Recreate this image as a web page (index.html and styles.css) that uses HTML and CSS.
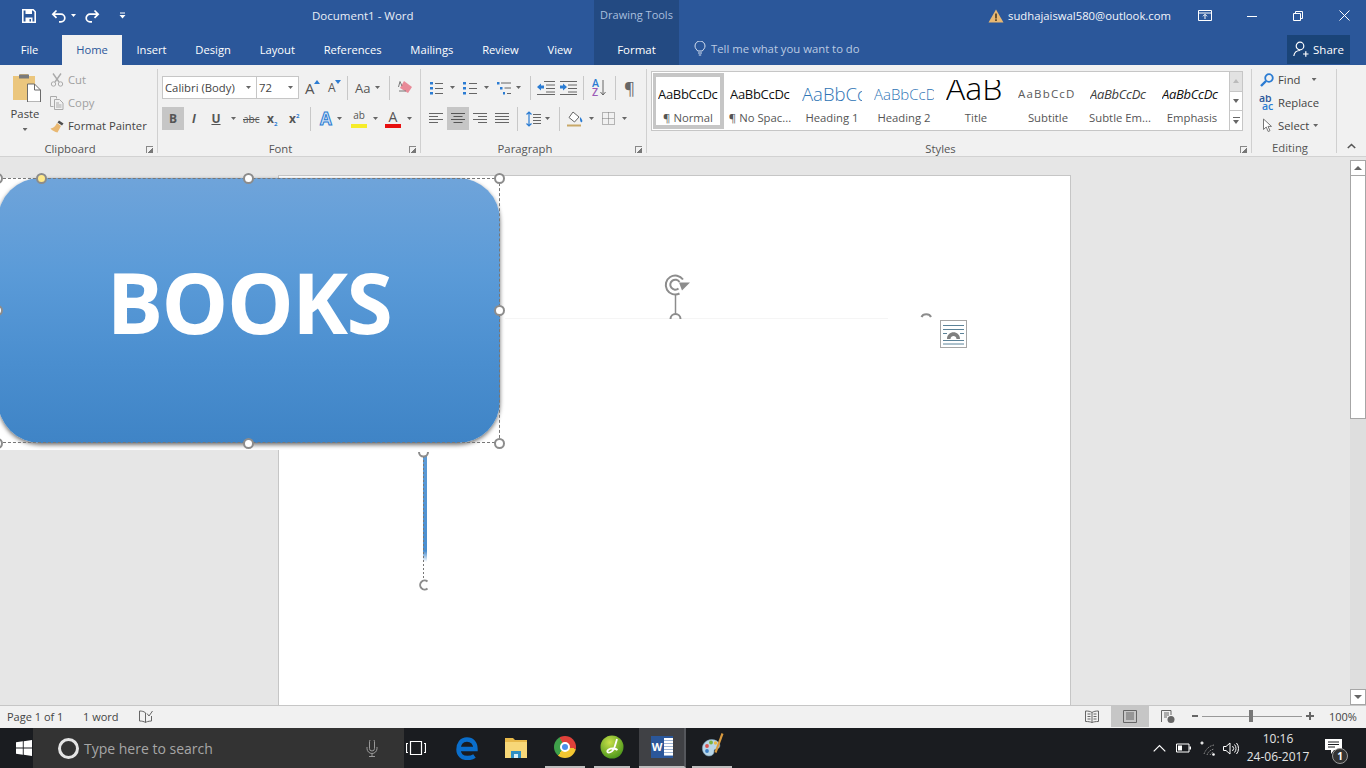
FILE: index.html
```html
<!DOCTYPE html>
<html lang="en">
<head>
    <meta charset="UTF-8">
    <title>Document1 - Word</title>
    <link rel="stylesheet" href="styles.css">
</head>
<body>
    <!-- Title bar and tabs -->
    <header class="header">
        <div class="header-left">
            <div class="title-row">
                <div class="qat">
                    <svg class="m22" width="14" height="14" viewBox="0 0 14 14"><path d="M.8.8h10.4l2 2v10.4H.8z" fill="none" stroke="#fff" stroke-width="1.6"/><path d="M3.5 1h6.5v4H3.5zM3.5 8.5h7V13h-1.5v-3h-1.5v3h-4z" fill="#fff"/></svg>
                    <svg class="m15" width="15" height="14" viewBox="0 0 15 14"><path d="M5.5 1.5 1.8 5.2l3.7 3.7M2 5.2h8a3.8 3.8 0 0 1 0 7.6H8" fill="none" stroke="#fff" stroke-width="1.7"/></svg>
                    <span class="caret caret-light m5"></span>
                    <svg class="m9" width="15" height="14" viewBox="0 0 15 14"><path d="M9.5 1.5l3.7 3.7-3.7 3.7M13 5.2H5a3.8 3.8 0 0 0 0 7.6h2" fill="none" stroke="#fff" stroke-width="1.7"/></svg>
                    <svg class="m19" width="7" height="7" viewBox="0 0 7 7"><path d="M1 .5h5v1H1zM.5 3h6L3.5 6.5z" fill="#fff"/></svg>
                </div>
                <span class="doc-title">Document1 - Word</span>
            </div>
            <nav class="tabs">
                <span class="tab tab-file">File</span>
                <span class="tab tab-active">Home</span>
                <span class="tab">Insert</span>
                <span class="tab">Design</span>
                <span class="tab">Layout</span>
                <span class="tab">References</span>
                <span class="tab">Mailings</span>
                <span class="tab">Review</span>
                <span class="tab">View</span>
            </nav>
        </div>
        <div class="context-tab">
            <span class="context-name">Drawing Tools</span>
            <span class="context-format">Format</span>
        </div>
        <div class="header-right">
            <div class="account-row">
                <svg class="warn" width="16" height="14" viewBox="0 0 16 14"><path d="M8 .5l7.5 13H.5z" fill="#e9b872"/><path d="M7.2 4.5h1.6v5H7.2zM7.2 10.3h1.6v1.7H7.2z" fill="#4b3a20"/></svg>
                <span class="email">sudhajaiswal580@outlook.com</span>
                <svg class="m26" width="14" height="11" viewBox="0 0 14 11"><path d="M.5.5h13v10H.5zM.5 3h13M7 9V4.5M5 6.3l2-2 2 2" fill="none" stroke="#fff"/></svg>
                <svg class="win-min" width="10" height="10" viewBox="0 0 10 10"><path d="M0 5.5h10" stroke="#fff"/></svg>
                <svg class="win-max" width="10" height="10" viewBox="0 0 10 10"><path d="M.5 2.5h7v7h-7zM2.5 2.5v-2h7v7h-2" fill="none" stroke="#fff"/></svg>
                <svg class="win-close" width="11" height="11" viewBox="0 0 11 11"><path d="M.5.5l10 10M10.5.5l-10 10" stroke="#fff"/></svg>
            </div>
            <div class="tell-row">
                <svg class="bulb" width="12" height="15" viewBox="0 0 12 15"><path d="M3.7 10C2.8 8.500 1 7.500 1 5a5 5 0 0 1 10 0c0 2.500-1.800 3.500-2.700 5zM4 12h4M4.800 14h2.400" fill="none" stroke="#d5e0f0"/></svg>
                <span class="tell">Tell me what you want to do</span>
                <span class="share">
                    <svg width="16" height="16" viewBox="0 0 16 16"><circle cx="7" cy="5" r="3.800" fill="none" stroke="#fff" stroke-width="1.200"/><path d="M.8 15c.5-3.500 3-5.500 6.200-5.500M10 13h5.500M12.800 10.200v5.500" fill="none" stroke="#fff" stroke-width="1.200"/></svg>
                    Share
                </span>
            </div>
        </div>
    </header>

    <!-- Ribbon -->
    <section class="ribbon">
        <div class="group group-clipboard">
            <div class="group-body clipboard">
                <div class="paste">
                    <svg width="28" height="29" viewBox="0 0 28 29"><path d="M0 3h7V1h8v2h7v24H0z" fill="#ebc67d"/><path d="M6 1.500h10v4H6z" fill="#7a7a7a"/><path d="M14.500 11h7l6 6v12h-13z" fill="#fff" stroke="#6b6b6b"/><path d="M21.500 11v6h6" fill="none" stroke="#6b6b6b"/></svg>
                    <span class="paste-label">Paste</span>
                    <span class="caret"></span>
                </div>
                <div class="action-list">
                    <div class="action action-off">
                        <svg width="14" height="14" viewBox="0 0 14 14"><path d="M3 .5l6 8.500M11 .5l-6 8.500" fill="none" stroke="#aaa" stroke-width="1.400"/><circle cx="3.500" cy="11" r="2.200" fill="none" stroke="#aaa"/><circle cx="10.500" cy="11" r="2.200" fill="none" stroke="#aaa"/></svg>
                        <span>Cut</span>
                    </div>
                    <div class="action action-off">
                        <svg width="14" height="14" viewBox="0 0 14 14"><path d="M.5.500h6v2M.5.500v10h3M4.500 3.500h5l3.500 3.500v6.500H4.500zM6 7h3M6 9h5.500M6 11h5.500" fill="none" stroke="#aaa"/></svg>
                        <span>Copy</span>
                    </div>
                    <div class="action">
                        <svg width="15" height="14" viewBox="0 0 15 14"><path d="M9 1.500l4.500 3-1.500 2-4.500-3z" fill="#4d4d4d"/><path d="M7 4l4 3-3.500 6.500C5 13 2 11.500.5 9.500 3 9.500 5.500 7 7 4z" fill="#e9b872"/></svg>
                        <span>Format Painter</span>
                    </div>
                </div>
            </div>
            <div class="group-label">Clipboard<i class="launcher"></i></div>
        </div>

        <div class="group group-font">
            <div class="group-body">
                <div class="row">
                    <span class="combo combo-font">Calibri (Body)<span class="caret"></span></span>
                    <span class="combo combo-size">72<span class="caret"></span></span>
                    <span class="font-a m6">A<i class="tri-up"></i></span>
                    <span class="font-a font-a-small m10">A<i class="tri-down"></i></span>
                    <span class="sep m7"></span>
                    <span class="change-case m7">Aa</span>
                    <span class="caret m4"></span>
                    <span class="sep m9"></span>
                    <svg class="m8" width="15" height="15" viewBox="0 0 15 15"><path d="M6 1l8 6-4 6-8-5z" fill="#e98a98"/><path d="M1 11h7M2 1.500L.5 7M2 1.500L4 6" fill="none" stroke="#777"/></svg>
                </div>
                <div class="row row-second">
                    <span class="fmt fmt-on">B</span>
                    <span class="fmt fmt-i m6">I</span>
                    <span class="fmt fmt-u m13">U</span>
                    <span class="caret m10"></span>
                    <span class="fmt-s m7">abc</span>
                    <span class="fmt-x m8">x<sub>2</sub></span>
                    <span class="fmt-x m9">x<sup>2</sup></span>
                    <span class="sep m8"></span>
                    <span class="effect m9">A</span>
                    <span class="caret m4"></span>
                    <span class="highlight m9">ab</span>
                    <span class="caret m6"></span>
                    <span class="font-color m7">A</span>
                    <span class="caret m6"></span>
                </div>
            </div>
            <div class="group-label">Font<i class="launcher"></i></div>
        </div>

        <div class="group group-para">
            <div class="group-body">
                <div class="row">
                    <svg width="14" height="14" viewBox="0 0 14 14"><path d="M1 1h3v2.500H1zM1 6h3v2.500H1zM1 11h3v2.500H1z" fill="#2b7cd3"/><path d="M6 2.500h8M6 7.500h8M6 12.500h8" stroke="#666"/></svg>
                    <span class="caret m7"></span>
                    <svg class="m8" width="14" height="14" viewBox="0 0 14 14"><path d="M0 1h3v2.500H0zM0 6h3v2.500H0zM0 11h3v2.500H0z" fill="#2b7cd3"/><path d="M6 2.500h8M6 7.500h8M6 12.500h8" stroke="#666"/></svg>
                    <span class="caret m7"></span>
                    <svg class="m8" width="14" height="14" viewBox="0 0 14 14"><path d="M0 1h2.500v2.500H0zM3 6h2.500v2.500H3zM6 11h2v2.500H6z" fill="#2b7cd3"/><path d="M4 2h10M7.500 7h6.500M10 12.500h4" stroke="#666"/></svg>
                    <span class="caret m5"></span>
                    <span class="sep m9"></span>
                    <svg class="m6" width="18" height="14" viewBox="0 0 18 14"><path d="M7 .5h11M9 4h9M9 7.500h9M9 11h9M0 13.500h18" stroke="#666"/><path d="M0 6l4-3.500v2h3v3H4v2z" fill="#2b7cd3"/></svg>
                    <svg class="m5" width="17" height="14" viewBox="0 0 17 14"><path d="M0 .5h17M8 4h9M8 7.500h9M8 11h9M0 13.500h17" stroke="#666"/><path d="M7 6L3 2.500v2H0v3h3v2z" fill="#2b7cd3"/></svg>
                    <span class="sep m6"></span>
                    <svg class="m8 icon-text" width="15" height="18" viewBox="0 0 15 18"><text x="0" y="8" fill="#2b7cd3">A</text><text x="0" y="17" fill="#9b59b6">Z</text><path d="M11 1v15M8.500 13l2.500 3 2.500-3" fill="none" stroke="#666"/></svg>
                    <span class="sep m8"></span>
                    <span class="pilcrow m8">¶</span>
                </div>
                <div class="row row-second">
                    <svg width="14" height="12" viewBox="0 0 14 12"><path d="M0 .5h14M0 3.500h9M0 6.500h14M0 9.500h9" stroke="#666"/></svg>
                    <span class="fmt fmt-on m4"><svg width="14" height="12" viewBox="0 0 14 12"><path d="M0 .5h14M2.500 3.500h9M0 6.500h14M2.500 9.500h9" stroke="#555"/></svg></span>
                    <svg class="m4" width="14" height="12" viewBox="0 0 14 12"><path d="M0 .5h14M5 3.500h9M0 6.500h14M5 9.500h9" stroke="#666"/></svg>
                    <svg class="m8" width="14" height="12" viewBox="0 0 14 12"><path d="M0 .5h14M0 3.500h14M0 6.500h14M0 9.500h14" stroke="#666"/></svg>
                    <span class="sep m8"></span>
                    <svg class="m8" width="15" height="16" viewBox="0 0 15 16"><path d="M3 1v14M.5 3.500L3 1l2.500 2.500M.5 12.500L3 15l2.500-2.500" fill="none" stroke="#2b7cd3" stroke-width="1.200"/><path d="M7 3.500h8M7 6.500h8M7 9.500h8M7 12.500h8" stroke="#666"/></svg>
                    <span class="caret m4"></span>
                    <span class="sep m9"></span>
                    <svg class="m7" width="17" height="16" viewBox="0 0 17 16"><path d="M6 1l6 5-4.500 5L2 6.500z" fill="#fff" stroke="#666"/><path d="M13 6c2 2 3 4 2 5s-2.500-1-2-5z" fill="#2b7cd3"/><path d="M0 14.500h14" stroke="#c8a868" stroke-width="2"/></svg>
                    <span class="caret m5"></span>
                    <svg class="m8" width="13" height="13" viewBox="0 0 13 13"><path d="M.5.500h12v12H.5zM6.500.500v12M.5 6.500h12" fill="none" stroke="#777" stroke-dasharray="1 1"/></svg>
                    <span class="caret m7"></span>
                </div>
            </div>
            <div class="group-label">Paragraph<i class="launcher"></i></div>
        </div>

        <div class="group group-styles">
            <div class="group-body styles-body">
                <div class="gallery">
                    <div class="style-item active"><span class="sample sample-normal">AaBbCcDc</span><span class="style-name">¶ Normal</span></div>
                    <div class="style-item"><span class="sample sample-normal">AaBbCcDc</span><span class="style-name">¶ No Spac...</span></div>
                    <div class="style-item"><span class="sample sample-h1">AaBbCc</span><span class="style-name">Heading 1</span></div>
                    <div class="style-item"><span class="sample sample-h2">AaBbCcD</span><span class="style-name">Heading 2</span></div>
                    <div class="style-item"><span class="sample sample-title">AaB</span><span class="style-name">Title</span></div>
                    <div class="style-item"><span class="sample sample-sub">AaBbCcD</span><span class="style-name">Subtitle</span></div>
                    <div class="style-item"><span class="sample sample-subtle">AaBbCcDc</span><span class="style-name">Subtle Em...</span></div>
                    <div class="style-item"><span class="sample sample-emph">AaBbCcDc</span><span class="style-name">Emphasis</span></div>
                </div>
                <div class="gallery-scroll">
                    <span class="gs-btn gs-up"><i class="tri-up"></i></span>
                    <span class="gs-btn"><i class="tri-down"></i></span>
                    <span class="gs-btn gs-more"><i class="more-line"></i><i class="tri-down"></i></span>
                </div>
            </div>
            <div class="group-label">Styles<i class="launcher"></i></div>
        </div>

        <div class="group group-editing">
            <div class="group-body editing">
                <div class="action">
                    <svg width="14" height="14" viewBox="0 0 14 14"><circle cx="9" cy="5" r="3.800" fill="none" stroke="#2b7cd3" stroke-width="1.800"/><path d="M6 8l-5 5" stroke="#2b7cd3" stroke-width="2.400"/></svg>
                    <span>Find</span><span class="caret m7"></span>
                </div>
                <div class="action">
                    <svg class="replace-icon icon-text" width="16" height="16" viewBox="0 0 16 16"><text x="0" y="7" fill="#2b579a">ab</text><text x="3" y="15" fill="#2b7cd3">ac</text></svg>
                    <span>Replace</span>
                </div>
                <div class="action">
                    <svg width="14" height="15" viewBox="0 0 14 15"><path d="M3.500 1v10.500l2.700-2.500 2 4.500 1.800-.8-2-4.300H11.500z" fill="#fff" stroke="#777"/></svg>
                    <span>Select</span><span class="caret"></span>
                </div>
            </div>
            <div class="group-label">Editing</div>
        </div>

        <div class="collapse">
            <svg width="9" height="6" viewBox="0 0 9 6"><path d="M.8 5l3.700-3.500L8.200 5" fill="none" stroke="#555" stroke-width="1.600"/></svg>
        </div>
    </section>

    <!-- Document area -->
    <main class="workspace">
        <div class="doc-scroll">
            <div class="page"></div>
            <div class="page-patch"></div>

            <div class="shape"><span class="shape-text">BOOKS</span></div>
            <div class="selection">
                <i class="handle handle-yellow"></i>
                <i class="handle handle-tl"></i>
                <i class="handle handle-tc"></i>
                <i class="handle handle-tr"></i>
                <i class="handle handle-ml"></i>
                <i class="handle handle-mr"></i>
                <i class="handle handle-bl"></i>
                <i class="handle handle-bc"></i>
                <i class="handle handle-br"></i>
            </div>
            <div class="sliver"></div>

            <svg class="canvas-marks" width="1350" height="550" viewBox="0 0 1350 550">
                <path d="M505 161.500h383" stroke="#f5f5f5"/>
                <path d="M423.500 295v133" stroke="#777" stroke-dasharray="2 2"/>
                <path d="M419 295a4.500 4.500 0 0 0 9 0M427.500 424.500a4.500 4.500 0 1 0 0 7" fill="#fff" stroke="#8c8c8c" stroke-width="2"/>
                <path d="M675.500 137v21" stroke="#8c8c8c" stroke-width="1.500"/>
                <path d="M670.500 162a5 5 0 0 1 10 0" fill="none" stroke="#8c8c8c" stroke-width="2"/>
                <path d="M921.500 160a5 4 0 0 1 9.500 0" fill="none" stroke="#8c8c8c" stroke-width="2"/>
                <path d="M683 122.500A9.500 9.500 0 1 0 679.500 136.500" fill="none" stroke="#8c8c8c" stroke-width="2"/>
                <path d="M679.500 125A5 5 0 1 0 678.500 131.500" fill="none" stroke="#8c8c8c" stroke-width="2"/>
                <path d="M679 125.500h11l-8 8z" fill="#8c8c8c"/>
            </svg>

            <div class="layout-btn">
                <svg width="21" height="21" viewBox="0 0 21 21"><path d="M0 1.500h21M0 5.500h21M0 9.500h4M17 9.500h4M0 16.500h21M0 20h21" stroke="#5b8298"/><path d="M4 15c0-9 13-9 13 0h-3.500c0-4-6-4-6 0z" fill="#7f7f7f"/></svg>
            </div>
        </div>

        <div class="scrollbar">
            <span class="sb-btn"><i class="tri-up"></i></span>
            <span class="sb-thumb"></span>
            <span class="sb-btn sb-down"><i class="tri-down"></i></span>
        </div>
    </main>

    <!-- Status bar -->
    <footer class="status">
        <span class="status-page">Page 1 of 1</span>
        <span class="status-words">1 word</span>
        <svg class="status-proof" width="14" height="13" viewBox="0 0 14 13"><path d="M6 2.500C5 1.500 3 1 .5 1v10c2.500 0 4.500.5 6 1.500M6.500 2.500v10M6.500 12.500c1-.7 2.500-1.300 6-1.500V6" fill="none" stroke="#666"/><path d="M8 3.500l2 2.500 3.500-5" fill="none" stroke="#666"/></svg>
        <div class="status-right">
            <svg width="14" height="13" viewBox="0 0 14 13"><path d="M.5 1c2.500 0 5 .3 6.500 1.500C8.500 1.300 11 1 13.500 1v10.500c-2.500 0-5 .3-6.500 1-1.500-.7-4-1-6.500-1zM7 2.500v10M2.500 4h3M2.500 6.500h3M2.500 9h3M8.500 4h3M8.500 6.500h3M8.500 9h3" fill="none" stroke="#666"/></svg>
            <span class="view-on"><svg width="14" height="13" viewBox="0 0 14 13"><path d="M.5.500h13v12H.5zM3 3h8M3 5h8M3 7h8M3 9h8" fill="none" stroke="#666"/></svg></span>
            <svg width="14" height="13" viewBox="0 0 14 13"><path d="M.5 12V.500h9.500V5M3 3h5M3 5h5M3 7h3" fill="none" stroke="#666"/><circle cx="10" cy="9.500" r="3.500" fill="#666"/></svg>
            <span class="zoom-minus"></span>
            <span class="zoom-track"><i class="zoom-thumb"></i></span>
            <span class="zoom-plus"></span>
            <span class="zoom-value">100%</span>
        </div>
    </footer>

    <!-- Windows taskbar -->
    <div class="taskbar">
        <div class="start">
            <svg width="16" height="16" viewBox="0 0 16 16"><path d="M0 2.300 6.800 1.300V7.500H0zM7.700 1.200 16 0V7.500H7.700zM0 8.500h6.800v6.200L0 13.700zM7.700 8.500H16V16L7.700 14.800z" fill="#fff"/></svg>
        </div>
        <div class="search">
            <span class="cortana"></span>
            <span class="search-text">Type here to search</span>
            <svg class="mic" width="12" height="17" viewBox="0 0 12 17"><path d="M3.500 1.500a2.500 2.500 0 0 1 5 0v7a2.500 2.500 0 0 1-5 0zM1 7v1.500a5 5 0 0 0 10 0V7M6 13.500V16M3 16.500h6" fill="none" stroke="#9a9a9a"/></svg>
        </div>
        <div class="app app-view">
            <svg width="20" height="16" viewBox="0 0 20 16"><path d="M4.500 1.500h11v13h-11zM2 3.500H.5v9H2M18 3.500h1.500v9H18" fill="none" stroke="#fff" stroke-width="1.200"/></svg>
        </div>
        <div class="app app-edge">
            <svg width="22" height="23" viewBox="0 0 22 23"><path d="M2.500 12H19.500C19.500 6 16 2.500 11 2.500 5.500 2.500 2.500 7 2.500 12.500c0 5.500 4 8.500 9 8.500 3 0 5.500-1 7-2" fill="none" stroke="#0a6ecb" stroke-width="4.400"/></svg>
        </div>
        <div class="app app-folder">
            <svg width="22" height="22" viewBox="0 0 22 22"><path d="M0 1h8l2 2h12v4H0z" fill="#e8b94a"/><path d="M0 5h22v16H0z" fill="#f7d778"/><path d="M6 14h10v7H6z" fill="#2f8fc4"/><path d="M9 17h4v4H9z" fill="#d8eef8"/></svg>
        </div>
        <div class="app app-chrome app-open"><span class="chrome-icon"><i></i></span></div>
        <div class="app app-green app-open">
            <svg width="24" height="24" viewBox="0 0 24 24"><defs><radialGradient id="dwBall" cx=".4" cy=".3" r=".8"><stop offset="0" stop-color="#c8e04a"/><stop offset="1" stop-color="#3f8f16"/></radialGradient></defs><circle cx="12" cy="12" r="11.500" fill="url(#dwBall)"/><path d="M17 4c-1.500 5-2 8-3.500 10.500s-5 4-6 2.500 2-4 6.500-3.500c1 .1 2.500.7 3.500 1.500" fill="none" stroke="#fff" stroke-width="1.800"/></svg>
        </div>
        <div class="app app-word app-open">
            <span class="word-icon"><b>W</b><i></i></span>
        </div>
        <div class="app app-paint app-open">
            <svg width="25" height="32" viewBox="0 0 25 32"><path d="M3 14c3-6 11-7 15-3 3 3 2 6-1 7-3 0-3 1-3 3s-2 4-5 4c-5 0-8-6-6-11z" fill="#b9d6e8" stroke="#7ba0b8" stroke-width=".6"/><circle cx="7" cy="15" r="1.900" fill="#d9534f"/><circle cx="11" cy="11.500" r="1.900" fill="#7cb342"/><circle cx="15.500" cy="12" r="1.700" fill="#e8b94a"/><circle cx="7" cy="20" r="1.900" fill="#3d7fc4"/><path d="M21.500 2l2 1-7 19-2-1z" fill="#d99a3f"/></svg>
        </div>
        <div class="tray">
            <svg width="13" height="8" viewBox="0 0 13 8"><path d="M.7 7.300 6.500 1.500l5.800 5.800" fill="none" stroke="#fff" stroke-width="1.200"/></svg>
            <svg class="m10" width="15" height="10" viewBox="0 0 15 10"><path d="M.5 1h12.500v8H.5z" fill="none" stroke="#fff"/><path d="M2 2.500h4v5H2zM13.500 3.500H15v3h-1.500z" fill="#fff"/></svg>
            <svg class="m9" width="16" height="15" viewBox="0 0 16 15"><path d="M1 1l2 2M3 1L1 3M2 0v4M0 2h4" stroke="#fff" stroke-width=".7"/><path d="M4 13C6 8 9 5 14 4M7 14c1-3 3-5 7-6M10 14c.8-1.500 2-2.500 4-3" fill="none" stroke="#8a8a8a" stroke-dasharray="1.500 1"/><circle cx="13.500" cy="13.500" r="1.300" fill="#fff"/></svg>
            <svg class="m7" width="16" height="13" viewBox="0 0 16 13"><path d="M.5 4.500h2.500L7 1v11L3 8.500H.5z" fill="none" stroke="#fff"/><path d="M9.500 4a3.500 3.500 0 0 1 0 5M11.500 2.500a6 6 0 0 1 0 8M13.500 1a8.500 8.500 0 0 1 0 11" fill="none" stroke="#fff"/></svg>
            <div class="clock"><span>10:16</span><span>24-06-2017</span></div>
            <span class="notify">
                <svg width="17" height="15" viewBox="0 0 17 15"><path d="M0 0h17v11h-8l-3 4v-4H0z" fill="#fff"/><path d="M3 3h11M3 5.500h11M3 8h7" stroke="#1a1c20"/></svg>
                <span class="notify-badge">1</span>
            </span>
        </div>
    </div>
</body>
</html>
```

FILE: styles.css
```css
/* Global Styles */
* {
    box-sizing: border-box;
}

html, body {
    margin: 0;
    padding: 0;
    height: 100%;
    overflow: hidden;
}

body {
    width: 1366px;
    height: 768px;
    font-family: 'Open Sans', 'Noto Sans', sans-serif;
    font-size: 11.3px;
    color: #444;
    background: #e6e6e6;
    display: flex;
    flex-direction: column;
}

svg {
    display: block;
    flex: none;
}

i {
    display: block;
    font-style: normal;
}

/* left margins for the icon rows */
.m4 { margin-left: 4px; }
.m5 { margin-left: 5px; }
.m6 { margin-left: 6px; }
.m7 { margin-left: 7px; }
.m8 { margin-left: 8px; }
.m9 { margin-left: 9px; }
.m10 { margin-left: 10px; }
.m13 { margin-left: 13px; }
.m15 { margin-left: 15px; }
.m19 { margin-left: 19px; }
.m22 { margin-left: 22px; }
.m26 { margin-left: 26px; }

.caret {
    flex: none;
    width: 5px;
    height: 3px;
    background: #666;
    clip-path: polygon(0 0, 100% 0, 50% 100%);
}

.caret-light {
    background: #fff;
}

.tri-up, .tri-down {
    width: 0;
    height: 0;
    border-left: 4px solid transparent;
    border-right: 4px solid transparent;
}

.tri-up {
    border-bottom: 4px solid #666;
}

.tri-down {
    border-top: 4px solid #666;
}

/* letters inside an icon */
.icon-text text {
    font-size: 10.5px;
    font-weight: 600;
}

/* Header */
.header {
    height: 65px;
    flex: none;
    display: flex;
    background: #2b579a;
    color: #fff;
    font-size: 11.5px;
}

.header-left {
    width: 594px;
    flex: none;
}

.title-row {
    height: 35px;
    display: flex;
    align-items: center;
    padding-bottom: 4px;
}

.qat {
    width: 312px;
    flex: none;
    display: flex;
    align-items: center;
}

.doc-title {
    color: #e9eef6;
}

.tabs {
    height: 30px;
    display: flex;
    font-size: 11.2px;
}

.tab {
    flex: none;
    height: 30px;
    line-height: 29px;
    padding: 0 14.4px;
    white-space: nowrap;
}

.tab-file {
    width: 62px;
    text-align: center;
    padding: 0 3px 0 0;
}

.tab-active {
    width: 60px;
    padding: 0;
    text-align: center;
    background: #f1f1f1;
    color: #2b579a;
}

.context-tab {
    width: 85px;
    flex: none;
    display: flex;
    flex-direction: column;
    align-items: center;
    background: #234a82;
}

.context-name {
    height: 35px;
    line-height: 30px;
    font-size: 11px;
    color: #a9bfde;
}

.context-format {
    height: 30px;
    line-height: 29px;
}

.header-right {
    flex: 1;
}

.account-row {
    height: 35px;
    display: flex;
    align-items: center;
    padding: 0 0 4px 309px;
}

.email {
    margin-left: 4px;
    width: 164px;
    flex: none;
    white-space: nowrap;
    font-size: 11.3px;
    color: #f2f5fa;
}

.win-min { margin-left: 35px; }
.win-max { margin-left: 36px; }
.win-close { margin-left: 36px; }

.tell-row {
    height: 30px;
    display: flex;
    align-items: center;
    padding: 0 0 1px 15px;
}

.tell {
    margin: 0 0 2px 5px;
    width: 151px;
    flex: none;
    white-space: nowrap;
    font-size: 11.3px;
    color: #bccbe2;
}

.bulb {
    margin-bottom: 2px;
}

.share {
    margin-left: 425px;
    width: 63px;
    height: 29px;
    flex: none;
    display: flex;
    align-items: center;
    justify-content: center;
    gap: 4px;
    padding-bottom: 1px;
    background: #1a4478;
}

/* Ribbon */
.ribbon {
    height: 92px;
    flex: none;
    display: flex;
    align-items: flex-start;
    background: #f1f1f1;
    border-bottom: 1px solid #d2d2d2;
    padding-top: 4px;
}

.group {
    height: 84px;
    flex: none;
    border-right: 1px solid #d0d0d0;
    display: flex;
    flex-direction: column;
}

.group-clipboard { width: 158px; }
.group-font { width: 263px; }
.group-para { width: 226px; }
.group-styles { width: 605px; }
.group-editing { width: 85px; }

.group-body {
    height: 74px;
    padding-top: 7px;
}

.group-font .group-body { padding-left: 4px; }
.group-para .group-body { padding-left: 8px; }

.group-label {
    position: relative;
    height: 10px;
    line-height: 12px;
    text-align: center;
    padding-right: 17px;
    color: #555;
}

.group-editing .group-label {
    padding-right: 8px;
}

.launcher {
    position: absolute;
    right: 4px;
    top: 3px;
    width: 7px;
    height: 7px;
    border-left: 1px solid #888;
    border-top: 1px solid #888;
    background: linear-gradient(135deg, transparent 55%, #777 55%);
}

.row {
    height: 23px;
    display: flex;
    align-items: center;
}

.row-second {
    margin-top: 8px;
}

.sep {
    flex: none;
    width: 1px;
    height: 24px;
    background: #c8c8c8;
}

/* Clipboard */
.clipboard {
    display: flex;
    padding-top: 0;
}

.paste {
    width: 50px;
    flex: none;
    display: flex;
    flex-direction: column;
    align-items: center;
    padding-top: 4px;
}

.paste svg {
    margin-left: 3px;
}

.paste-label {
    margin-top: 4px;
    color: #444;
}

.paste .caret {
    margin-top: 7px;
}

.action-list, .editing {
    margin-top: -1px;
}

.action {
    height: 23px;
    display: flex;
    align-items: center;
    gap: 3px;
    white-space: nowrap;
}

.action-off {
    color: #a0a0a0;
}

.action-off svg {
    margin-right: 1px;
}

/* Font group */
.combo {
    flex: none;
    height: 23px;
    display: flex;
    align-items: center;
    justify-content: space-between;
    background: #fff;
    border: 1px solid #c6c6c6;
    padding: 0 5px 0 2px;
    white-space: nowrap;
}

.combo-font { width: 94px; border-right: 0; }
.combo-size { width: 43px; }

.font-a {
    flex: none;
    width: 13px;
    display: flex;
    align-items: flex-start;
    font-size: 15px;
    line-height: 18px;
    color: #555;
}

.font-a i {
    margin: 1px 0 0 -1px;
    border-left-width: 3px;
    border-right-width: 3px;
    border-top-color: #2b7cd3;
    border-bottom-color: #2b7cd3;
}

.font-a-small {
    width: 12px;
    font-size: 12px;
}

.change-case {
    flex: none;
    width: 16px;
    font-size: 13px;
    color: #555;
}

.fmt {
    flex: none;
    display: flex;
    align-items: center;
    justify-content: center;
    color: #555;
    font-weight: 700;
    font-size: 12px;
}

.fmt-on {
    width: 22px;
    height: 23px;
    background: #c6c6c6;
}

.fmt-i {
    width: 8px;
    font-style: italic;
}

.fmt-u {
    width: 10px;
    text-decoration: underline;
}

.fmt-s {
    flex: none;
    width: 16px;
    font-size: 10px;
    color: #555;
    text-decoration: line-through;
}

.fmt-x {
    flex: none;
    width: 13px;
    font-size: 12px;
    font-weight: 700;
    color: #555;
    line-height: 12px;
}

.fmt-x sub, .fmt-x sup {
    font-size: 6px;
    line-height: 0;
    color: #2b7cd3;
}

.effect {
    flex: none;
    width: 13px;
    font-size: 17px;
    font-weight: 700;
    line-height: 20px;
    color: #cfe1f5;
    -webkit-text-stroke: 1px #2b7cd3;
}

.highlight {
    flex: none;
    width: 16px;
    height: 19px;
    font-size: 10px;
    line-height: 13px;
    text-align: center;
    color: #555;
    border-bottom: 4px solid #f6ec2a;
}

.font-color {
    flex: none;
    width: 16px;
    height: 19px;
    font-size: 14px;
    line-height: 15px;
    text-align: center;
    color: #555;
    border-bottom: 4px solid #e81010;
}

/* Paragraph group */
.pilcrow {
    flex: none;
    width: 12px;
    font-size: 17px;
    line-height: 18px;
    color: #666;
}

/* Styles gallery */
.styles-body {
    display: flex;
    padding: 2px 0 0 4px;
}

.gallery {
    width: 578px;
    height: 60px;
    flex: none;
    display: flex;
    background: #fff;
    border: 1px solid #c6c6c6;
    border-right: 0;
}

.style-item {
    width: 72px;
    height: 58px;
    flex: none;
    display: flex;
    flex-direction: column;
    align-items: center;
    padding-top: 8px;
    overflow: hidden;
}

.style-item.active {
    width: 71px;
    margin-left: 1px;
    height: 56px;
    margin-top: 1px;
    padding-top: 3px;
    border: 4px solid #c6c6c6;
    border-left-width: 3px;
}

.sample {
    flex: none;
    width: 60px;
    height: 28px;
    line-height: 28px;
    overflow: hidden;
    white-space: nowrap;
    color: #111;
    font-size: 13px;
}

.sample-normal {
    letter-spacing: -.3px;
}

.sample-h1 {
    font-size: 18.5px;
    color: #2e74b5;
    font-weight: 300;
}

.sample-h2 {
    font-size: 15px;
    color: #2e74b5;
    font-weight: 300;
}

.sample-title {
    font-size: 32px;
    font-weight: 300;
    line-height: 15px;
    color: #000;
    height: 23px;
    margin-bottom: 5px;
}

.sample-sub {
    color: #5a5a5a;
    letter-spacing: 1.2px;
    font-size: 11.5px;
}

.sample-subtle {
    font-style: italic;
    color: #404040;
    letter-spacing: -.3px;
}

.sample-emph {
    font-style: italic;
    letter-spacing: -.3px;
}

.style-name {
    flex: none;
    margin-top: 2px;
    line-height: 16px;
    white-space: nowrap;
    color: #555;
}

.gallery-scroll {
    width: 14px;
    height: 60px;
    flex: none;
    display: flex;
    flex-direction: column;
    background: #fff;
    border: 1px solid #c6c6c6;
}

.gs-btn {
    flex: 1;
    display: flex;
    flex-direction: column;
    align-items: center;
    justify-content: center;
    gap: 2px;
    border-bottom: 1px solid #c6c6c6;
}

.gs-btn:last-child {
    border-bottom: 0;
}

.gs-btn i {
    border-left-width: 3px;
    border-right-width: 3px;
}

.gs-up {
    background: #e2e2e2;
}

.gs-up i {
    border-bottom-color: #bbb;
}

.more-line {
    width: 7px;
    height: 1px;
    background: #666;
}

/* Editing */
.editing {
    padding: 0 0 0 7px;
}

.editing .action {
    gap: 4px;
}

.editing svg {
    margin-left: 1px;
}

.editing .replace-icon {
    margin: 0 -1px 0 0;
}

.collapse {
    width: 29px;
    flex: none;
    padding: 74px 0 0 10px;
}

/* Document area */
.workspace {
    height: 549px;
    flex: none;
    display: flex;
    background: #e6e6e6;
    border-bottom: 1px solid #c6c6c6;
}

.doc-scroll {
    position: relative;
    width: 1350px;
    flex: none;
    overflow: hidden;
    padding: 18px 0 0 278px;
}

.page {
    width: 793px;
    height: 540px;
    background: #fff;
    border: 1px solid #c6c6c6;
}

.page-patch {
    position: absolute;
    left: 0;
    top: 21px;
    width: 290px;
    height: 272px;
    background: #fff;
}

.shape {
    position: absolute;
    left: -2px;
    top: 21px;
    width: 502px;
    height: 265px;
    border-radius: 42px;
    background: linear-gradient(to bottom, #6fa4da 0%, #5b9bd8 35%, #4a8ecf 70%, #3f84c6 100%);
    box-shadow: 0 2px 4px rgba(0, 0, 0, .55);
    display: flex;
    align-items: center;
    justify-content: center;
    padding-bottom: 18px;
}

.shape-text {
    font-size: 84px;
    font-weight: 700;
    line-height: 1;
    color: #fff;
    letter-spacing: -1.5px;
}

.selection {
    position: absolute;
    left: -2px;
    top: 21px;
    width: 502px;
    height: 265px;
    border: 1px dashed #777;
}

.handle {
    position: absolute;
    width: 11px;
    height: 11px;
    border-radius: 50%;
    background: #fff;
    border: 2px solid #8c8c8c;
}

.handle-yellow { left: 37px; top: -6px; background: #ffe98a; }
.handle-tl { left: -7px; top: -6px; }
.handle-tc { left: 244px; top: -6px; }
.handle-tr { left: 495px; top: -6px; }
.handle-ml { left: -7px; top: 126px; }
.handle-mr { left: 495px; top: 126px; }
.handle-bl { left: -7px; top: 259px; }
.handle-bc { left: 244px; top: 259px; }
.handle-br { left: 495px; top: 259px; }

.sliver {
    position: absolute;
    left: 423px;
    top: 295px;
    width: 4px;
    height: 110px;
    background: linear-gradient(to bottom, #5d9bd6, #4a8ecf 90%, #fff);
}

.canvas-marks {
    position: absolute;
    left: 0;
    top: 0;
}

.layout-btn {
    position: absolute;
    left: 940px;
    top: 163px;
    width: 27px;
    height: 28px;
    display: flex;
    align-items: center;
    justify-content: center;
    background: #fff;
    border: 1px solid #a6a6a6;
}

/* Scrollbar */
.scrollbar {
    width: 16px;
    flex: none;
    margin-top: 3px;
    display: flex;
    flex-direction: column;
    background: #dedede;
}

.sb-btn {
    height: 16px;
    display: flex;
    align-items: center;
    justify-content: center;
    background: #fff;
    border: 1px solid #a6a6a6;
    flex: none;
}

.sb-thumb {
    height: 243px;
    background: #fff;
    border: 1px solid #a6a6a6;
    border-top: 0;
    flex: none;
}

.sb-down {
    margin-top: auto;
}

/* Status bar */
.status {
    height: 22px;
    flex: none;
    display: flex;
    align-items: center;
    background: #f1f1f1;
    font-size: 11px;
    color: #444;
    padding: 0 0 2px 7px;
}

.status-page {
    width: 76px;
}

.status-words {
    width: 56px;
}

.status-right {
    margin-left: auto;
    height: 22px;
    display: flex;
    align-items: center;
    padding-right: 9px;
}

.view-on {
    width: 38px;
    height: 22px;
    margin: 0 12px;
    display: flex;
    align-items: center;
    justify-content: center;
    background: #c6c6c6;
}

.zoom-minus {
    width: 6px;
    height: 2px;
    margin-left: 17px;
    background: #666;
}

.zoom-track {
    position: relative;
    width: 100px;
    height: 1px;
    margin-left: 4px;
    background: #999;
}

.zoom-thumb {
    position: absolute;
    left: 47px;
    top: -6px;
    width: 4px;
    height: 12px;
    background: #777;
}

.zoom-plus {
    width: 8px;
    height: 8px;
    margin-left: 4px;
    background: linear-gradient(#666, #666) center / 8px 2px no-repeat, linear-gradient(#666, #666) center / 2px 8px no-repeat;
}

.zoom-value {
    margin-left: 15px;
    width: 28px;
}

/* Taskbar */
.taskbar {
    height: 40px;
    flex: 1;
    display: flex;
    background: #1a1c20;
    color: #e4e4e4;
}

.start {
    width: 33px;
    flex: none;
    display: flex;
    align-items: center;
    padding-left: 16px;
}

.search {
    width: 371px;
    flex: none;
    display: flex;
    align-items: center;
    background: #333;
    padding-left: 25px;
}

.cortana {
    flex: none;
    width: 21px;
    height: 21px;
    border: 3px solid #e4e4e4;
    border-radius: 50%;
}

.search-text {
    flex: none;
    margin-left: 5px;
    width: 282px;
    font-size: 14px;
    color: #a6a6a6;
}

.app {
    flex: none;
    height: 40px;
    display: flex;
    align-items: center;
    justify-content: center;
}

.app-open {
    border-bottom: 2px solid #bdbdbd;
}

.app-view { width: 24px; }
.app-edge { width: 44px; margin-left: 17px; }
.app-folder { width: 44px; margin-left: 5px; }
.app-chrome { width: 40px; margin-left: 7px; }
.app-green { width: 36px; margin-left: 9px; }

.app-word {
    width: 47px;
    margin-left: 9px;
    background: #404145;
    border-right: 2px solid #55575c;
}

.app-paint { width: 40px; margin-left: 6px; }

.chrome-icon {
    width: 22px;
    height: 22px;
    border-radius: 50%;
    display: flex;
    align-items: center;
    justify-content: center;
    background: conic-gradient(#e0413a 0 100deg, #f3c631 100deg 220deg, #3fa04a 220deg 330deg, #e0413a 330deg);
}

.chrome-icon i {
    width: 10px;
    height: 10px;
    border-radius: 50%;
    background: #4a8fe8;
    border: 2px solid #fff;
}

.word-icon {
    width: 22px;
    height: 22px;
    display: flex;
    background: #2b579a;
    color: #fff;
}

.word-icon b {
    width: 13px;
    font-size: 11px;
    line-height: 22px;
    text-align: center;
}

.word-icon i {
    width: 9px;
    margin: 2px 0;
    background: repeating-linear-gradient(#fff 0 2px, #9db5d6 2px 3px);
}

.tray {
    margin-left: auto;
    display: flex;
    align-items: center;
    padding-right: 17px;
}

.clock {
    width: 58px;
    margin-left: 10px;
    display: flex;
    flex-direction: column;
    align-items: center;
    font-size: 12px;
    line-height: 18px;
    white-space: nowrap;
}

.notify {
    position: relative;
    margin-left: 18px;
    width: 24px;
    height: 28px;
    padding-top: 5px;
}

.notify-badge {
    position: absolute;
    left: 7px;
    top: 14px;
    width: 16px;
    height: 16px;
    border-radius: 50%;
    background: #333;
    border: 1px solid #9a9a9a;
    color: #fff;
    font-size: 10px;
    font-weight: 700;
    line-height: 14px;
    text-align: center;
}
```
